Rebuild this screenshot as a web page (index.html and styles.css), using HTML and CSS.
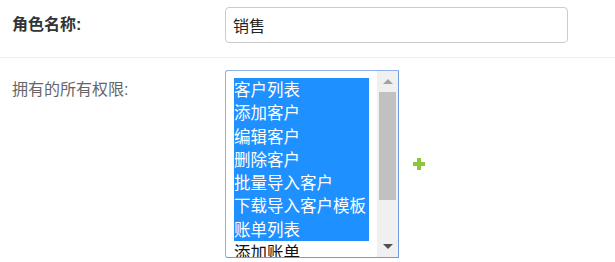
FILE: index.html
```html
<!DOCTYPE html>
<html lang="zh-CN">
<head>
    <meta charset="UTF-8">
    <meta name="viewport" content="width=device-width, initial-scale=1.0">
    <title>角色编辑</title>
    <link rel="stylesheet" href="styles.css">
</head>
<body>
    <div class="role-form">
        <div class="form-row row-name">
            <label class="form-label label-strong" for="role-name">角色名称:</label>
            <input class="text-input" id="role-name" type="text" value="销售">
        </div>

        <div class="form-row row-perms">
            <label class="form-label label-muted">拥有的所有权限:</label>
            <div class="perm-picker">
                <div class="listbox">
                    <ul class="options">
                        <li class="option selected">客户列表</li>
                        <li class="option selected">添加客户</li>
                        <li class="option selected">编辑客户</li>
                        <li class="option selected">删除客户</li>
                        <li class="option selected">批量导入客户</li>
                        <li class="option selected">下载导入客户模板</li>
                        <li class="option selected">账单列表</li>
                        <li class="option">添加账单</li>
                        <li class="option">编辑账单</li>
                    </ul>
                    <div class="scrollbar">
                        <span class="arrow arrow-up"></span>
                        <span class="track"><span class="thumb"></span></span>
                        <span class="arrow arrow-down"></span>
                    </div>
                </div>
                <span class="add-btn" title="添加">
                    <svg width="12" height="12" viewBox="0 0 12 12">
                        <rect x="4" y="0" width="4" height="12" fill="#8cc63f"/>
                        <rect x="0" y="4" width="12" height="4" fill="#8cc63f"/>
                    </svg>
                </span>
            </div>
        </div>
    </div>
</body>
</html>
```

FILE: styles.css
```css
body {
    margin: 0;
    font-family: "Liberation Sans", "Noto Sans CJK SC", sans-serif;
    font-size: 16px;
    color: #333;
    background: #fff;
}
.form-row {
    display: grid;
    grid-template-columns: 213px auto;
    padding: 0 12px;
}
.row-name {
    padding-top: 7px;
    padding-bottom: 14px;
    border-bottom: 1px solid #eee;
    align-items: center;
}
.row-perms {
    padding-top: 12px;
    align-items: start;
}
.form-label {
    line-height: 20px;
}
.label-strong {
    font-weight: bold;
    color: #333;
}
.label-muted {
    color: #666;
    padding-top: 10px;
}
.text-input {
    box-sizing: border-box;
    width: 343px;
    height: 36px;
    border: 1px solid #ccc;
    border-radius: 4px;
    padding: 0 7px;
    font-family: "Liberation Sans", "Noto Sans CJK SC", sans-serif;
    font-size: 16px;
    color: #222;
}
.perm-picker {
    display: flex;
    align-items: center;
    gap: 14px;
}
.listbox {
    box-sizing: border-box;
    width: 174px;
    height: 188px;
    display: flex;
    border: 1px solid #8fb3e8;
    border-right-color: #6d9ce3;
    border-bottom-color: #6d9ce3;
    border-radius: 3px 0 0 3px;
    overflow: hidden;
    background: #fff;
}
.options {
    list-style: none;
    margin: 0;
    padding: 7px 0 0 8px;
    width: 135px;
    font-family: "Noto Sans CJK SC", sans-serif;
    font-size: 16.5px;
    color: #111;
}
.option {
    height: 23.3px;
    line-height: 23.3px;
    white-space: nowrap;
}
.option.selected {
    background: #1e90ff;
    color: #fff;
}
.scrollbar {
    margin-left: auto;
    width: 21px;
    display: flex;
    flex-direction: column;
    background: #f0f0f0;
}
.arrow {
    height: 21px;
    display: flex;
    align-items: center;
    justify-content: center;
}
.arrow::before {
    content: "";
    border-left: 5px solid transparent;
    border-right: 5px solid transparent;
}
.arrow-up::before {
    border-bottom: 5px solid #a3a3a3;
}
.arrow-down::before {
    border-top: 5px solid #505050;
}
.track {
    flex: 1;
}
.thumb {
    display: block;
    width: 17px;
    height: 108px;
    margin-left: 2px;
    background: #c1c1c1;
}
.add-btn {
    display: flex;
    cursor: pointer;
}
```
